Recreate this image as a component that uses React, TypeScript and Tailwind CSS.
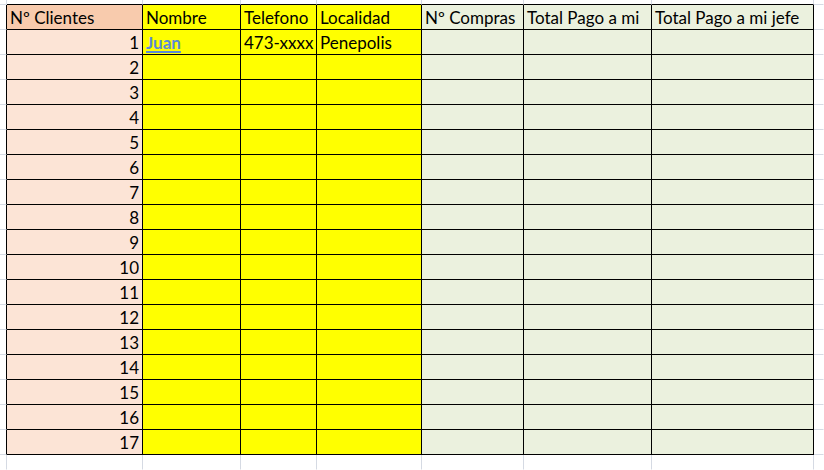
import React from 'react';

const headers = ['Nº Clientes', 'Nombre', 'Telefono', 'Localidad', 'Nº Compras', 'Total Pago a mi', 'Total Pago a mi jefe'];

const rows = Array.from({ length: 17 }, (_, i) => i + 1);

const fill = (col: number, header: boolean) => {
  if (col === 0) return header ? 'bg-[#f8cbad]' : 'bg-[#fce4d6]';
  if (col <= 3) return 'bg-[#ffff00]';
  return 'bg-[#ebf1de]';
};

const Gutter = ({ right, bottom }: { right: string; bottom: string }) => (
  <div className={`border-r border-b ${right} ${bottom}`} />
);

const App = () => {
  const cols = [0, 1, 2, 3, 4, 5, 6];

  return (
    <div
      className="grid h-[470px] w-[824px] overflow-hidden bg-white text-[17px] leading-none text-black grid-cols-[7px_136px_98px_76px_105px_102px_128px_162px_1fr] grid-rows-[5px_repeat(18,25px)_1fr]"
      style={{ fontFamily: 'Lato, "Liberation Sans", sans-serif' }}
    >
      {/* top gutter */}
      <Gutter right="border-r-[#d5dae3]" bottom="border-b-[#d5dae3]" />
      {cols.map(c => (
        <Gutter key={'t' + c} right="border-r-[#d5dae3]" bottom="border-b-black" />
      ))}
      <Gutter right="border-r-transparent" bottom="border-b-[#d5dae3]" />

      {/* header */}
      <Gutter right="border-r-black" bottom="border-b-[#d5dae3]" />
      {headers.map((h, c) => (
        <div key={h} className={`flex items-end border-r border-b border-black px-[3px] pb-[3px] whitespace-nowrap ${fill(c, true)}`}>
          {h}
        </div>
      ))}
      <Gutter right="border-r-transparent" bottom="border-b-[#d5dae3]" />

      {rows.map(n => (
        <React.Fragment key={n}>
          <Gutter right="border-r-black" bottom="border-b-[#d5dae3]" />
          {cols.map(c => (
            <div
              key={c}
              className={`flex items-end border-r border-b border-black px-[3px] pb-[3px] whitespace-nowrap ${fill(c, false)} ${c === 0 ? 'justify-end' : ''}`}
            >
              {c === 0 && n}
              {n === 1 && c === 1 && (
                <span className="font-bold text-[#5b8bd6] underline decoration-2 underline-offset-2">Juan</span>
              )}
              {n === 1 && c === 2 && '473-xxxx'}
              {n === 1 && c === 3 && 'Penepolis'}
            </div>
          ))}
          <Gutter right="border-r-transparent" bottom="border-b-[#d5dae3]" />
        </React.Fragment>
      ))}

      {/* bottom gutter */}
      <Gutter right="border-r-[#d5dae3]" bottom="border-b-transparent" />
      {cols.map(c => (
        <Gutter key={'b' + c} right="border-r-[#d5dae3]" bottom="border-b-transparent" />
      ))}
      <Gutter right="border-r-transparent" bottom="border-b-transparent" />
    </div>
  );
};

export default App;
